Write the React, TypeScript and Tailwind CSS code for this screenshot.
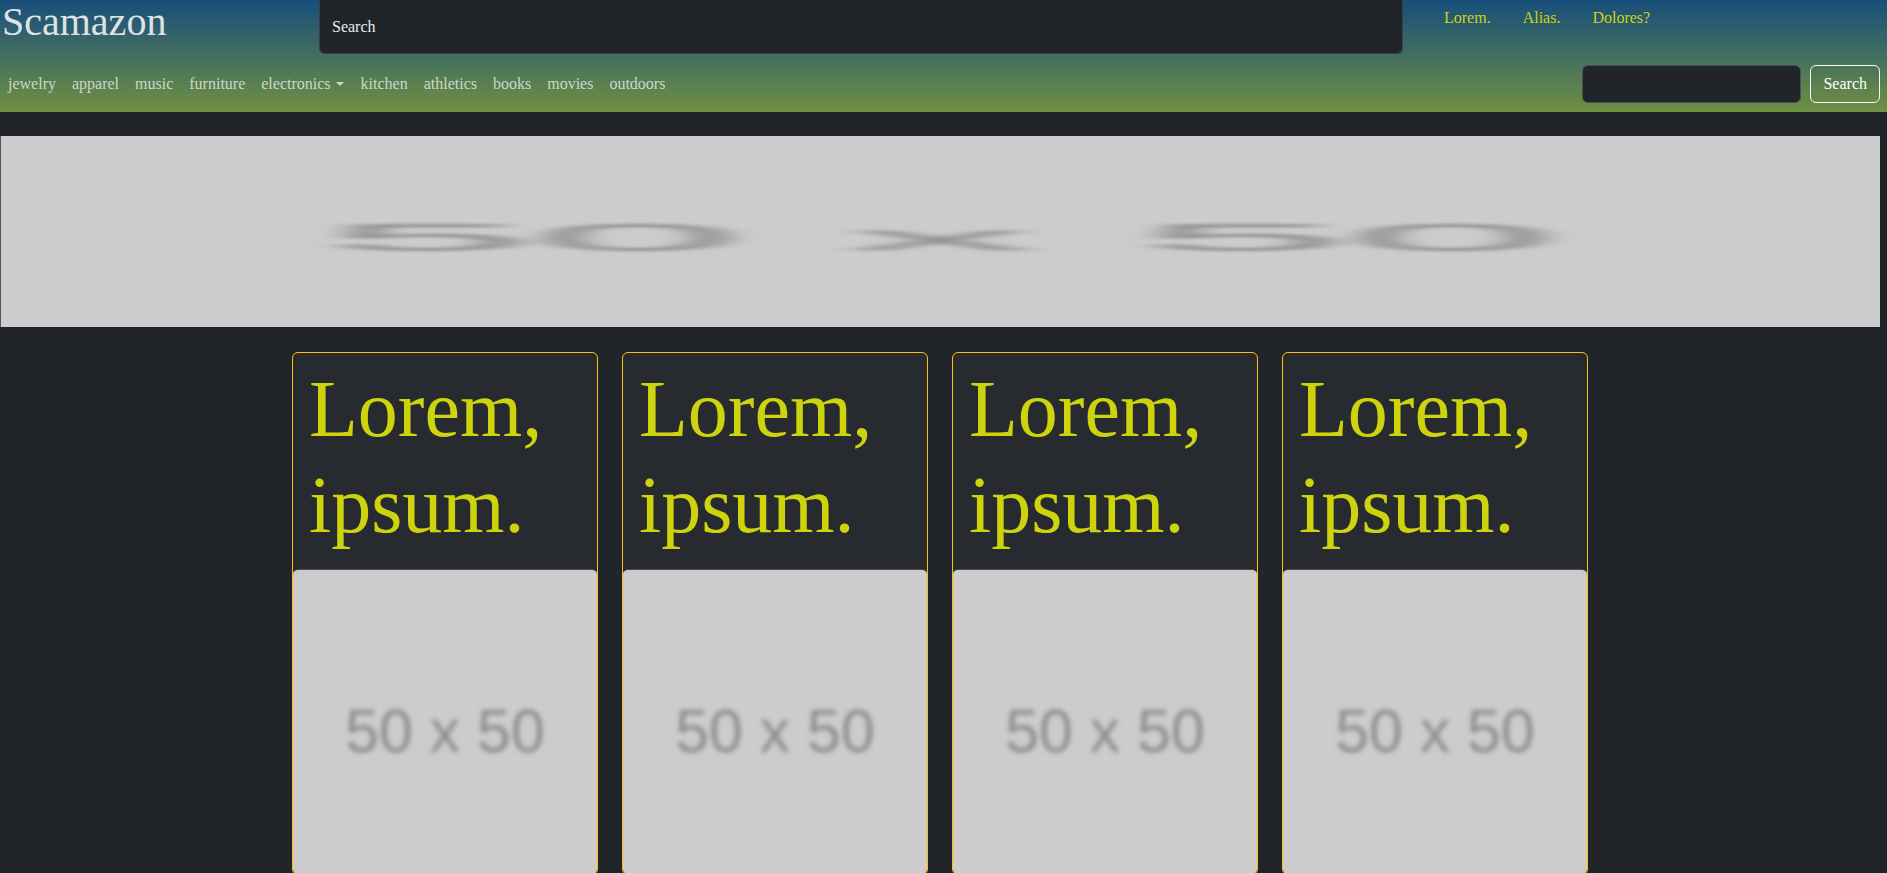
import { useId } from "react";

const categories = ["jewelry", "apparel", "music", "furniture", "electronics", "kitchen", "athletics", "books", "movies", "outdoors"];
const topLinks = ["Lorem.", "Alias.", "Dolores?"];

function Placeholder({ className }: { className?: string }) {
  const id = useId().replace(/:/g, "");
  return (
    <svg viewBox="0 0 50 50" preserveAspectRatio="none" className={className}>
      <defs>
        <filter id={`blur${id}`} x="-20%" y="-20%" width="140%" height="140%">
          <feGaussianBlur stdDeviation="0.45" />
        </filter>
      </defs>
      <rect width="50" height="50" fill="#cccccc" />
      <text
        x="25"
        y="30"
        textAnchor="middle"
        fontSize="10"
        fontFamily="'Liberation Sans', Arial, sans-serif"
        fill="#8c8c8c"
        filter={`url(#blur${id})`}
      >
        50 x 50
      </text>
    </svg>
  );
}

export default function App() {
  return (
    <div className="min-h-screen bg-[#212529] font-['Liberation_Serif',serif] text-[#dee2e6]">
      <header className="w-full h-[112px] bg-[linear-gradient(#184e7b,#6f9042)]">
        <div className="flex h-[55px]">
          <div className="w-[319px] pl-[2px]">
            <a className="text-[40px] leading-[44px] text-[#dee2e6]">Scamazon</a>
          </div>
          <div className="w-[1084px] h-[54px] bg-[#212529] border-x border-b border-[#3a3f45] rounded-b-md flex items-center px-3">
            <input
              className="w-full bg-transparent outline-none text-[16px] text-[#dee2e6] placeholder:text-[#e9ecef]"
              placeholder="Search"
            />
          </div>
          <ul className="flex ml-[25px] pt-[6px] text-[16px] leading-6 text-[#cdd30d]">
            {topLinks.map((l) => (
              <li key={l} className="px-4">{l}</li>
            ))}
          </ul>
        </div>
        <div className="flex items-center h-[57px]">
          <ul className="flex text-[16px] leading-6 text-white/70">
            {categories.map((c) => (
              <li key={c} className="px-2 flex items-center">
                {c}
                {c === "electronics" && (
                  <span className="ml-[5px] mr-[1px] inline-block w-0 h-0 border-x-[4px] border-x-transparent border-t-[4px] border-t-current" />
                )}
              </li>
            ))}
          </ul>
          <div className="ml-auto mr-[7px] flex items-center gap-[9px]">
            <input className="w-[219px] h-[38px] bg-[#212529] border border-[#495057] rounded-md px-3 outline-none text-[16px]" />
            <button className="h-[38px] px-3 border border-[#f8f9fa] rounded-md text-white text-[16px] leading-6">
              Search
            </button>
          </div>
        </div>
      </header>

      <div className="w-[1880px]">
        <div className="mt-6 h-[191px] border-l border-[#555]">
          <Placeholder className="block w-full h-full" />
        </div>

        <div className="mt-[25px] mx-auto w-[1296px] flex gap-6 pb-10">
          {[0, 1, 2, 3].map((i) => (
            <div key={i} className="w-[306px] border border-[#ffc107] rounded-md bg-[#272a2f] overflow-hidden">
              <h1 className="pt-2 px-4 pb-4 text-[80px] leading-[96px] font-normal text-[#cdd30d]">
                Lorem, ipsum.
              </h1>
              <div className="border-t border-[#4a4e53] rounded-t-[5px] overflow-hidden">
                <Placeholder className="block w-full aspect-square" />
              </div>
            </div>
          ))}
        </div>
      </div>
    </div>
  );
}
